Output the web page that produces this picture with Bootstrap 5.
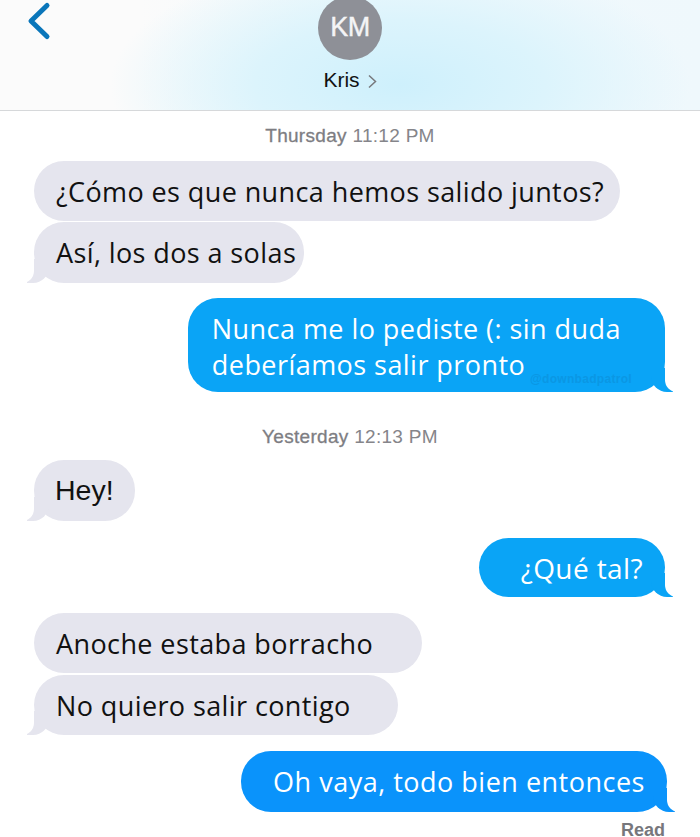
<!DOCTYPE html>
<html lang="es">
<head>
  <meta charset="UTF-8" />
  <meta name="viewport" content="width=device-width, initial-scale=1" />
  <title>Kris</title>
  <link href="https://cdn.jsdelivr.net/npm/bootstrap@5.3.3/dist/css/bootstrap.min.css" rel="stylesheet" />
  <style>
    html, body {
      height: 837px;
      overflow: hidden;
      background-color: #fff;
    }
    .chat-head {
      height: 111px;
      padding-left: 26px;
      border-bottom: 1px solid #d6d8da;
      background:
        radial-gradient(ellipse 290px 130px at 400px 85px, #cef0fc 0%, #dcf4fc 50%, rgba(235, 248, 252, 0) 100%),
        linear-gradient(90deg, #fbfbfb 20%, #f2f9fc 50%, #eff8fc 100%);
    }
    .back-btn {
      width: 26px;
      height: 42px;
    }
    .contact {
      width: 64px;
      margin-left: 266px;
      margin-top: -4px;
    }
    .avatar {
      width: 64px;
      height: 64px;
      padding-bottom: 1px;
      background-color: #8e9097;
      color: #f4f4f6;
      font: 27px "Liberation Sans", sans-serif;
      letter-spacing: -.5px;
      -webkit-text-stroke: .4px;
    }
    .contact-name {
      margin-top: 8px;
      font: 21px/24px "Liberation Sans", sans-serif;
      color: #111;
      white-space: nowrap;
    }
    .contact-name svg {
      margin-left: 8px;
    }
    .stamp {
      font: 19px/22px "Liberation Sans", sans-serif;
      color: #85858a;
      text-align: center;
      letter-spacing: .3px;
    }
    .stamp b {
      font-weight: 400;
      color: #7d7d82;
      -webkit-text-stroke: .3px;
    }
    .bubble {
      position: relative;
      font: 27px/36px "Open Sans", "Noto Sans", sans-serif;
      letter-spacing: .4px;
      padding: 13px 22px 11px;
      border-radius: 30px;
      white-space: nowrap;
    }
    .got {
      align-self: flex-start;
      margin-left: 34px;
      background-color: #e5e5ee;
      color: #111;
    }
    .sent {
      align-self: flex-end;
      margin-right: 35px;
      background-color: #0aa4f6;
      color: #fff;
    }
    .sent.deep {
      background-color: #0a93fb;
    }
    .tail-l::before, .tail-l::after, .tail-r::before, .tail-r::after {
      content: "";
      position: absolute;
      bottom: 0;
      height: 24px;
    }
    .tail-l::before {
      left: -7px;
      width: 22px;
      background-color: #e5e5ee;
      border-bottom-right-radius: 16px;
    }
    .tail-l::after {
      left: -20px;
      width: 20px;
      background-color: #fff;
      border-bottom-right-radius: 12px;
    }
    .tail-r::before {
      right: -8px;
      width: 22px;
      background-color: inherit;
      border-bottom-left-radius: 16px;
    }
    .tail-r::after {
      right: -20px;
      width: 20px;
      background-color: #fff;
      border-bottom-left-radius: 12px;
    }
    .watermark {
      position: absolute;
      right: 33px;
      bottom: 6px;
      font: 700 12px/14px "Liberation Sans", sans-serif;
      letter-spacing: .3px;
      color: #0a97e4;
    }
    .read {
      align-self: flex-end;
      margin-right: 35px;
      font: 700 18px/20px "Liberation Sans", sans-serif;
      color: #77777c;
    }
    /* widths and gaps of each message, read off the picture */
    .thu { margin-top: 14px; }
    .yes { margin-top: 34px; }
    .first { margin-top: 14px; padding-right: 16px; }
    .two { margin-top: 1px; }
    .asi { padding-right: 8px; padding-bottom: 12px; }
    .blue-one { margin-top: 15px; padding: 13px 44px 9px 24px; letter-spacing: .45px; }
    .hey-msg { margin-top: 12px; padding: 12px 21px 13px; font-family: "Liberation Sans", sans-serif; font-size: 28.5px; letter-spacing: 0; }
    .tal { margin-top: 17px; padding: 12px 22px 11px 42px; font-size: 28px; }
    .anoche { margin-top: 16px; padding-right: 49px; }
    .quiero { margin-top: 2px; padding-right: 47px; }
    .vaya { margin-top: 16px; margin-right: 33px; padding: 13px 22px 12px 32px; letter-spacing: .5px; }
    .read { margin-top: 8px; }
  </style>
</head>
<body>

<header class="chat-head d-flex">
  <svg class="back-btn" viewBox="0 0 26 42" fill="none" stroke="#0a76ba" stroke-width="5" stroke-linecap="round" stroke-linejoin="round">
    <path d="M21 5.5 5 21 21 36.5" />
  </svg>
  <div class="contact d-flex flex-column align-items-center">
    <div class="avatar rounded-circle d-flex align-items-center justify-content-center flex-shrink-0">KM</div>
    <div class="contact-name">Kris<svg width="9" height="15" viewBox="0 0 9 15" fill="none" stroke="#77787c" stroke-width="1.5"><path d="M1 1.5 7.5 7.5 1 13.5" /></svg></div>
  </div>
</header>

<main class="d-flex flex-column">
  <div class="stamp thu"><b>Thursday</b> 11:12 PM</div>
  <div class="bubble got first">¿Cómo es que nunca hemos salido juntos?</div>
  <div class="bubble got tail-l two asi">Así, los dos a solas</div>
  <div class="bubble sent tail-r blue-one">Nunca me lo pediste (: sin duda<br />deberíamos salir pronto<span class="watermark">@downbadpatrol</span></div>
  <div class="stamp yes"><b>Yesterday</b> 12:13 PM</div>
  <div class="bubble got tail-l hey-msg">Hey!</div>
  <div class="bubble sent tail-r tal">¿Qué tal?</div>
  <div class="bubble got anoche">Anoche estaba borracho</div>
  <div class="bubble got tail-l quiero">No quiero salir contigo</div>
  <div class="bubble sent deep tail-r vaya">Oh vaya, todo bien entonces</div>
  <div class="read">Read</div>
</main>

<script src="https://cdn.jsdelivr.net/npm/bootstrap@5.3.3/dist/js/bootstrap.bundle.min.js"></script>
</body>
</html>
